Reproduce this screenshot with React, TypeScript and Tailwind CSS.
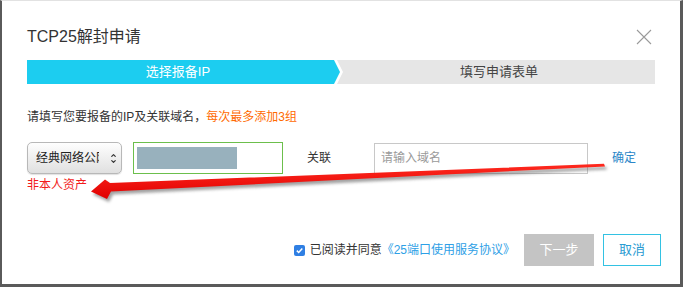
import { ChevronDown, ChevronUp } from "lucide-react";

const FONT = "font-['Liberation_Sans','Noto_Sans_CJK_SC',sans-serif]";

function Steps() {
  return (
    <div className="relative mt-[13px] flex h-[24px] w-full">
      <div className="flex h-full w-[302px] items-center justify-center bg-[#1ccdf0] text-[13px] text-white">
        选择报备IP
      </div>
      <svg width="14" height="24" viewBox="0 0 14 24" className="shrink-0">
        <rect x="0" y="0" width="14" height="24" fill="#e6e6e6" />
        <polygon points="0,0 8,0 14,12 8,24 0,24 4,12" fill="#ffffff" />
        <polygon points="0,0 5,0 11,12 5,24 0,24" fill="#1ccdf0" />
      </svg>
      <div className="flex h-full flex-1 items-center justify-center bg-[#e6e6e6] text-[13px] text-[#444]">
        填写申请表单
      </div>
    </div>
  );
}

function ArrowOverlay() {
  const pts = "604,163.8 110,183 105,179.5 91,191.5 107,199 111,191.6 605,166.4";
  return (
    <svg className="pointer-events-none absolute left-0 top-0" width="683" height="287" viewBox="0 0 683 287">
      <defs>
        <filter id="blur" x="-10%" y="-50%" width="120%" height="200%">
          <feGaussianBlur stdDeviation="1.4" />
        </filter>
        <linearGradient id="red" x1="0" y1="0" x2="0" y2="1">
          <stop offset="0" stopColor="#ff2a1f" />
          <stop offset="1" stopColor="#e00000" />
        </linearGradient>
      </defs>
      <polygon points={pts} fill="#555" opacity="0.55" transform="translate(2,3)" filter="url(#blur)" />
      <polygon points={pts} fill="url(#red)" />
    </svg>
  );
}

export default function App() {
  return (
    <div className={`relative h-[287px] w-[683px] overflow-hidden bg-white ${FONT}`}>
      <div className="flex h-full w-full flex-col border-b-[3px] border-l-2 border-r-[3px] border-t border-[#5a5a5a] border-t-[#e2e2e2] pl-[25px] pr-[25px]">
        <div className="mt-[26px] flex h-[20px] items-center justify-between">
          <h1 className="text-[16px] leading-[20px] text-[#333]">TCP25解封申请</h1>
          <svg width="16" height="16" viewBox="0 0 16 16" className="mr-[3px]">
            <path d="M1 1 L15 15 M15 1 L1 15" stroke="#9a9a9a" strokeWidth="1.1" fill="none" />
          </svg>
        </div>

        <Steps />

        <p className="mt-[25px] text-[12px] leading-[16px] text-[#333]">
          请填写您要报备的IP及关联域名，<span className="text-[#ff6a00]">每次最多添加3组</span>
        </p>

        <div className="mt-[17px] flex h-[32px] items-center">
          <div className="flex h-[32px] w-[95px] items-center rounded-[5px] border border-[#b8b8b8] bg-gradient-to-b from-[#fefefe] to-[#e0e0e0] pl-[8px] shadow-[0_1px_1px_rgba(0,0,0,0.12)]">
            <span className="w-[63px] overflow-hidden whitespace-nowrap text-[12px] text-[#222]">经典网络公网</span>
            <span className="ml-[11px] flex flex-col text-[#333]">
              <ChevronUp size={7} strokeWidth={4} className="mb-[-1px]" />
              <ChevronDown size={7} strokeWidth={4} />
            </span>
          </div>
          <div className="ml-[11px] flex h-[32px] w-[150px] items-center border border-[#6cbf4c] bg-white pl-[3px]">
            <div className="h-[22px] w-[100px] bg-[#98b1bd]" />
          </div>
          <span className="ml-[24px] text-[12px] text-[#333]">关联</span>
          <div className="ml-[43px] flex h-[31px] w-[214px] items-center border border-[#c8c8c8] bg-white pl-[6px] text-[12px] text-[#9a9a9a]">
            请输入域名
          </div>
          <span className="ml-[24px] text-[12px] text-[#2a86c8]">确定</span>
        </div>

        <p className="mt-[3px] text-[12px] leading-[16px] text-[#f21b1b]">非本人资产</p>

        <div className="-mr-[6px] mt-[41px] flex h-[32px] items-center justify-end">
          <span className="flex h-[11px] w-[11px] items-center justify-center rounded-[2px] bg-[#2f7fe3]">
            <svg width="9" height="9" viewBox="0 0 9 9">
              <path d="M1.8 4.6 L3.7 6.5 L7.3 2.4" stroke="#fff" strokeWidth="1.5" fill="none" />
            </svg>
          </span>
          <span className="ml-[5px] text-[12px] text-[#333]">已阅读并同意</span>
          <span className="text-[12px] text-[#2ea0e6]">《25端口使用服务协议》</span>
          <button className="ml-[9px] h-[32px] w-[70px] bg-[#c4c4c4] text-[13px] text-white">下一步</button>
          <button className="ml-[9px] h-[32px] w-[58px] border border-[#33c2e3] bg-white text-[13px] text-[#2a9bd2]">
            取消
          </button>
        </div>
      </div>
      <ArrowOverlay />
    </div>
  );
}
